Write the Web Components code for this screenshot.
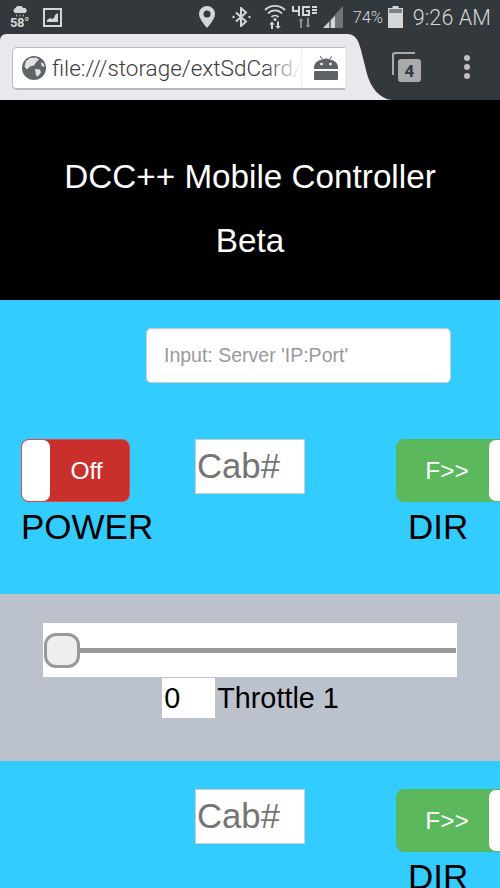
<!DOCTYPE html>
<html>
<head>
<meta charset="utf-8">
<title>DCC++ Mobile Controller</title>
<style>
    html, body { margin: 0; padding: 0; background: #33ccff; }
    body { width: 500px; height: 888px; overflow: hidden; font-family: "Liberation Sans", Arial, sans-serif; }
</style>
</head>
<body>
<phone-status></phone-status>
<browser-bar url="file:///storage/extSdCard/" tabs="4"></browser-bar>
<page-title>
    <span>DCC++ Mobile Controller</span>
    <span>Beta</span>
</page-title>
<blue-panel height="294" top="28">
    <server-input>Input: Server 'IP:Port'</server-input>
    <cab-row>
        <flip-switch slot="power" state="off">Off</flip-switch>
        <span slot="power-label">POWER</span>
        <cab-input slot="cab">Cab#</cab-input>
        <flip-switch slot="dir" state="on">F&gt;&gt;</flip-switch>
        <span slot="dir-label">DIR</span>
    </cab-row>
</blue-panel>
<throttle-panel value="0">Throttle 1</throttle-panel>
<blue-panel height="127" top="28">
    <cab-row>
        <cab-input slot="cab">Cab#</cab-input>
        <flip-switch slot="dir" state="on">F&gt;&gt;</flip-switch>
        <span slot="dir-label">DIR</span>
    </cab-row>
</blue-panel>

<script>
class PhoneStatus extends HTMLElement {
    constructor() {
        super()
        this.attachShadow({mode: 'open'})
    }

    connectedCallback() {
        this.shadowRoot.innerHTML = `
        <style>
            :host {
                display: flex;
                align-items: center;
                height: 34px;
                background: #33383c;
                color: #d4d6d7;
                font-family: Roboto, sans-serif;
            }
            .weather { margin-left: 10px; width: 19px; display: flex; flex-direction: column; align-items: center; }
            .temp { font-size: 13px; font-weight: 700; line-height: 11px; margin-top: 0; letter-spacing: -.3px; }
            .pic { margin-left: 14px; }
            .right { margin-left: auto; display: flex; align-items: center; }
            svg { display: block; }
            .pct { font-size: 16.500px; font-weight: 300; margin-left: 9px; letter-spacing: -.2px; }
            .time { font-size: 21.500px; font-weight: 300; margin: 0 9px 0 10px; letter-spacing: .1px; }
        </style>
        <div class="weather">
            <svg width="16" height="11" viewBox="0 0 16 11" fill="#d4d6d7">
                <path d="M3 7a2.600 2.600 0 0 1 .6-4.900A4 4 0 0 1 11 2a2.600 2.600 0 0 1 2 5z"/>
                <path d="M4 8.500h1.200v2H4zM7.400 8.500h1.200v2H7.400zM10.800 8.500H12v2h-1.200z" opacity=".7"/>
            </svg>
            <span class="temp">58°</span>
        </div>
        <svg class="pic" width="19" height="19" viewBox="0 0 19 19">
            <rect x="1" y="1" width="17" height="17" fill="none" stroke="#d4d6d7" stroke-width="2"/>
            <path d="M4 14v-2l3-2 2 1 2-1 1-3 3-2v9z" fill="#d4d6d7"/>
        </svg>
        <div class="right">
            <svg width="18" height="24" viewBox="0 0 18 24" style="margin-right:16px">
                <path fill-rule="evenodd" fill="#d4d6d7" d="M9 1a8 8 0 0 0-8 8c0 5.500 8 14 8 14s8-8.500 8-14a8 8 0 0 0-8-8zm0 4.500a3.500 3.500 0 1 1 0 7 3.500 3.500 0 0 1 0-7z"/>
            </svg>
            <svg width="19" height="20" viewBox="0 0 19 20" style="margin-right:13px">
                <path d="M4 5.500l10 9-5 4.500V1l5 4.500-10 9" fill="none" stroke="#d4d6d7" stroke-width="2"/>
                <circle cx="1.500" cy="10" r="1.200" fill="#d4d6d7"/><circle cx="17.500" cy="10" r="1.200" fill="#d4d6d7"/>
            </svg>
            <svg width="22" height="26" viewBox="0 0 22 26" style="margin-right:5px">
                <g fill="none" stroke="#d4d6d7" stroke-width="1.800">
                    <path d="M1 6a14 14 0 0 1 20 0"/><path d="M4 9.500a9.500 9.500 0 0 1 14 0"/><path d="M7.500 13a5 5 0 0 1 7 0"/>
                </g>
                <circle cx="11" cy="15.500" r="1.500" fill="#d4d6d7"/>
                <path d="M7 25v-4.500H5.200L8 17.500l2.800 3H9V25zM15 17.500V22h1.800L14 25l-2.800-3H13v-4.500z" fill="#d4d6d7"/>
            </svg>
            <svg width="27" height="26" viewBox="0 0 27 26" style="margin-right:4px">
                <path d="M1 2v6h6v4h2V2H7v4H3V2zM19 2h-8v10h8V6h-4v2h2v2h-4V4h6zM21 2h5v2h-5zM21 5h5v2h-5zM21 8h5v2h-5z" fill="#d4d6d7"/>
                <path d="M9 24v-7H7.500L10 14l2.500 3H11v7zM18 14v7h1.500L17 24l-2.500-3H16v-7z" fill="#8d9092"/>
            </svg>
            <svg width="22" height="24" viewBox="0 0 22 24">
                <path d="M21 1v22H1z" fill="#6f7477"/>
                <path d="M1 23l6-6v6zM9 15l4-4v12H9z" fill="#d4d6d7"/>
            </svg>
            <span class="pct">74%</span>
            <svg width="15" height="22" viewBox="0 0 15 22" style="margin-left:5px">
                <path d="M4.500 0h6v2H15v20H0V2h4.500z" fill="#d4d6d7"/>
                <path d="M1 3h13v4H1z" fill="#7c8082"/>
            </svg>
            <span class="time">9:26 AM</span>
        </div>
        `
    }
}

class BrowserBar extends HTMLElement {
    constructor() {
        super()
        this.attachShadow({mode: 'open'})
    }

    connectedCallback() {
        const url = this.getAttribute('url')
        const tabs = this.getAttribute('tabs')
        this.shadowRoot.innerHTML = `
        <style>
            :host {
                display: flex;
                height: 67px;
                background: #33383c;
                box-sizing: border-box;
                border-bottom: 1px solid #000;
            }
            .tab {
                position: relative;
                width: 345px;
                background: #e8e8ed;
                border-top-left-radius: 6px;
                box-sizing: border-box;
                padding: 13px 0 0 12px;
                z-index: 1;
            }
            .curve { position: absolute; left: 345px; top: 0; display: block; }
            .omni {
                position: relative;
                width: 339px;
                height: 43px;
                box-sizing: border-box;
                background: #fff;
                border: 1px solid #b9b9bc;
                border-bottom-width: 2px;
                border-radius: 5px;
                display: flex;
                align-items: center;
                padding-left: 9px;
                overflow: hidden;
            }
            .url {
                margin-left: 6px;
                font: 300 22.500px Roboto, sans-serif;
                color: #3c3c3c;
                white-space: nowrap;
            }
            .fade {
                position: absolute;
                top: 0;
                bottom: 0;
                left: 252px;
                width: 37px;
                background: linear-gradient(to right, rgba(255,255,255,0), rgba(255,255,255,.85) 85%, #fff);
            }
            .bot {
                position: absolute;
                top: 0;
                bottom: 0;
                right: 0;
                width: 48px;
                background: #fff;
                border-left: 1px solid #efeff1;
                display: flex;
                align-items: center;
                justify-content: center;
            }
            .tools { display: flex; align-items: center; flex: 1; padding-left: 47px; }
            .count {
                position: relative;
                width: 29px;
                height: 30px;
                margin-bottom: 1px;
            }
            .count::before {
                content: "";
                position: absolute;
                left: 0;
                top: 0;
                width: 21px;
                height: 21px;
                border: 2px solid #a8aaab;
                border-right: 0;
                border-bottom: 0;
                border-radius: 3px 0 0 0;
            }
            .count span {
                position: absolute;
                left: 6px;
                top: 7px;
                width: 23px;
                height: 23px;
                background: #a8aaab;
                border-radius: 3px;
                color: #33383c;
                font: 700 17px/24px Roboto, sans-serif;
                text-align: center;
            }
            .dots { margin-left: 43px; display: flex; flex-direction: column; gap: 3px; margin-bottom: 1px; }
            .dots i { display: block; width: 6px; height: 6px; border-radius: 50%; background: #bfc1c2; }
        </style>
        <div class="tab">
            <div class="omni">
                <svg width="24" height="24" viewBox="0 0 24 24">
                    <circle cx="12" cy="12" r="12" fill="#5f6468"/>
                    <path d="M8 2l6-.5 3 2-3 3-2 3-4 1-3 3-2.500-3L4 5zM13 13l5 .5 1 3-3 4-2-1-.5-3zM19 6l3 2 .5 3-3-1z" fill="#dfe1e2"/>
                </svg>
                <span class="url">${url}</span>
                <div class="fade"></div>
                <div class="bot">
                    <svg width="24" height="24" viewBox="0 0 24 24" fill="#5f6264">
                        <path d="M6.500 0l2.300 3.200a8 8 0 0 1 6.400 0L17.500 0l.8.6-2.200 3.100A8.200 8.200 0 0 1 24 13H0a8.200 8.200 0 0 1 7.900-9.300L5.700.6z"/>
                        <rect x="0" y="15" width="24" height="9" rx="1"/>
                        <circle cx="7.500" cy="8" r="1.300" fill="#fff"/><circle cx="16.500" cy="8" r="1.300" fill="#fff"/>
                    </svg>
                </div>
            </div>
            <svg class="curve" width="46" height="66" viewBox="0 0 46 66">
                <path d="M0 0h2c8 0 11 5 14 16l6 24c4 14 12 24 24 26H0z" fill="#e8e8ed"/>
            </svg>
        </div>
        <div class="tools">
            <div class="count"><span>${tabs}</span></div>
            <div class="dots"><i></i><i></i><i></i></div>
        </div>
        `
    }
}

class PageTitle extends HTMLElement {
    constructor() {
        super()
        const shadow = this.attachShadow({mode: 'open'})
        shadow.innerHTML = `
        <style>
            :host {
                display: flex;
                flex-direction: column;
                align-items: center;
                gap: 21px;
                height: 199px;
                box-sizing: border-box;
                padding-top: 54px;
                background: #000;
                color: #fff;
                font-size: 33.250px;
                line-height: 43px;
            }
            ::slotted(span) { display: block; }
        </style>
        <slot></slot>
        `
    }
}

class BluePanel extends HTMLElement {
    constructor() {
        super()
        const shadow = this.attachShadow({mode: 'open'})
        shadow.innerHTML = `
        <style>
            :host {
                display: block;
                background: #33ccff;
                box-sizing: border-box;
                overflow: hidden;
            }
        </style>
        <slot></slot>
        `
    }

    connectedCallback() {
        this.style.height = this.getAttribute('height') + 'px'
        this.style.paddingTop = this.getAttribute('top') + 'px'
    }
}

class ServerInput extends HTMLElement {
    constructor() {
        super()
        const shadow = this.attachShadow({mode: 'open'})
        shadow.innerHTML = `
        <style>
            :host {
                display: flex;
                align-items: center;
                width: 305px;
                height: 55px;
                box-sizing: border-box;
                margin: 0 0 56px 146px;
                padding-left: 17px;
                background: #fff;
                border: 1px solid #ccc;
                border-radius: 5px;
                box-shadow: inset 0 1px 1px rgba(0,0,0,.075);
                color: #999;
                font-size: 19.500px;
            }
        </style>
        <slot></slot>
        `
    }
}

class CabRow extends HTMLElement {
    constructor() {
        super()
        const shadow = this.attachShadow({mode: 'open'})
        shadow.innerHTML = `
        <style>
            :host {
                display: grid;
                grid-template-columns: 174px 201px 1fr;
                padding-left: 21px;
                align-items: start;
                font-size: 35px;
                line-height: 40px;
                color: #000;
            }
            .col { display: flex; flex-direction: column; align-items: flex-start; }
            ::slotted([slot="dir-label"]) { margin-left: 12px; }
            .label { margin-top: 5px; }
        </style>
        <div class="col">
            <slot name="power"></slot>
            <div class="label"><slot name="power-label"></slot></div>
        </div>
        <div class="col"><slot name="cab"></slot></div>
        <div class="col">
            <slot name="dir"></slot>
            <div class="label"><slot name="dir-label"></slot></div>
        </div>
        `
    }
}

class FlipSwitch extends HTMLElement {
    constructor() {
        super()
        const shadow = this.attachShadow({mode: 'open'})
        shadow.innerHTML = `
        <style>
            :host {
                display: flex;
                height: 63px;
                box-sizing: border-box;
                border-radius: 8px;
                border: 1px solid #e04a46;
                background: #c9302c;
                color: #fff;
                font-size: 24.500px;
                line-height: 61px;
            }
            :host([state="on"]) {
                width: 130px;
                flex: none;
                background: #5cb85c;
                border-color: #58b858;
                flex-direction: row-reverse;
            }
            :host([state="off"]) { width: 109px; }
            .knob {
                width: 28px;
                background: #fff;
                border-radius: 7px;
            }
            :host([state="on"]) .knob { width: 36px; }
            .text { flex: 1; text-align: center; padding-right: 6px; }
            :host([state="on"]) .text { padding: 0 0 0 8px; }
        </style>
        <div class="knob"></div>
        <div class="text"><slot></slot></div>
        `
    }
}

class CabInput extends HTMLElement {
    constructor() {
        super()
        const shadow = this.attachShadow({mode: 'open'})
        shadow.innerHTML = `
        <style>
            :host {
                display: block;
                width: 110px;
                height: 55px;
                box-sizing: border-box;
                padding-left: 1px;
                background: #fff;
                border: 1px solid #ccc;
                color: #757575;
                font-size: 34.700px;
                line-height: 53px;
            }
        </style>
        <slot></slot>
        `
    }
}

class ThrottlePanel extends HTMLElement {
    constructor() {
        super()
        this.attachShadow({mode: 'open'})
    }

    connectedCallback() {
        this.shadowRoot.innerHTML = `
        <style>
            :host {
                display: flex;
                flex-direction: column;
                align-items: center;
                height: 167px;
                box-sizing: border-box;
                padding-top: 29px;
                background: #bcc2cc;
                color: #000;
                font-size: 28.800px;
            }
            .track {
                width: 414px;
                height: 54px;
                box-sizing: border-box;
                background: #fff;
                display: flex;
                align-items: center;
                padding: 0 1px;
            }
            input {
                -webkit-appearance: none;
                appearance: none;
                width: 100%;
                height: 36px;
                margin: 0;
                background: transparent;
            }
            input::-webkit-slider-runnable-track {
                height: 5px;
                background: #999;
            }
            input::-webkit-slider-thumb {
                -webkit-appearance: none;
                width: 36px;
                height: 35px;
                margin-top: -15px;
                box-sizing: border-box;
                background: #eee;
                border: 3px solid #999;
                border-radius: 12px;
            }
            .line { display: flex; align-items: center; gap: 2px; margin-top: 1px; margin-left: 1px; }
            .num {
                width: 53px;
                height: 40px;
                box-sizing: border-box;
                padding-left: 2px;
                background: #fff;
                line-height: 40px;
            }
        </style>
        <div class="track"><input type="range" min="0" max="126" value="${this.getAttribute('value')}"></div>
        <div class="line">
            <div class="num">${this.getAttribute('value')}</div>
            <span><slot></slot></span>
        </div>
        `
    }
}

customElements.define('phone-status', PhoneStatus)
customElements.define('browser-bar', BrowserBar)
customElements.define('page-title', PageTitle)
customElements.define('blue-panel', BluePanel)
customElements.define('server-input', ServerInput)
customElements.define('cab-row', CabRow)
customElements.define('flip-switch', FlipSwitch)
customElements.define('cab-input', CabInput)
customElements.define('throttle-panel', ThrottlePanel)
</script>
</body>
</html>
